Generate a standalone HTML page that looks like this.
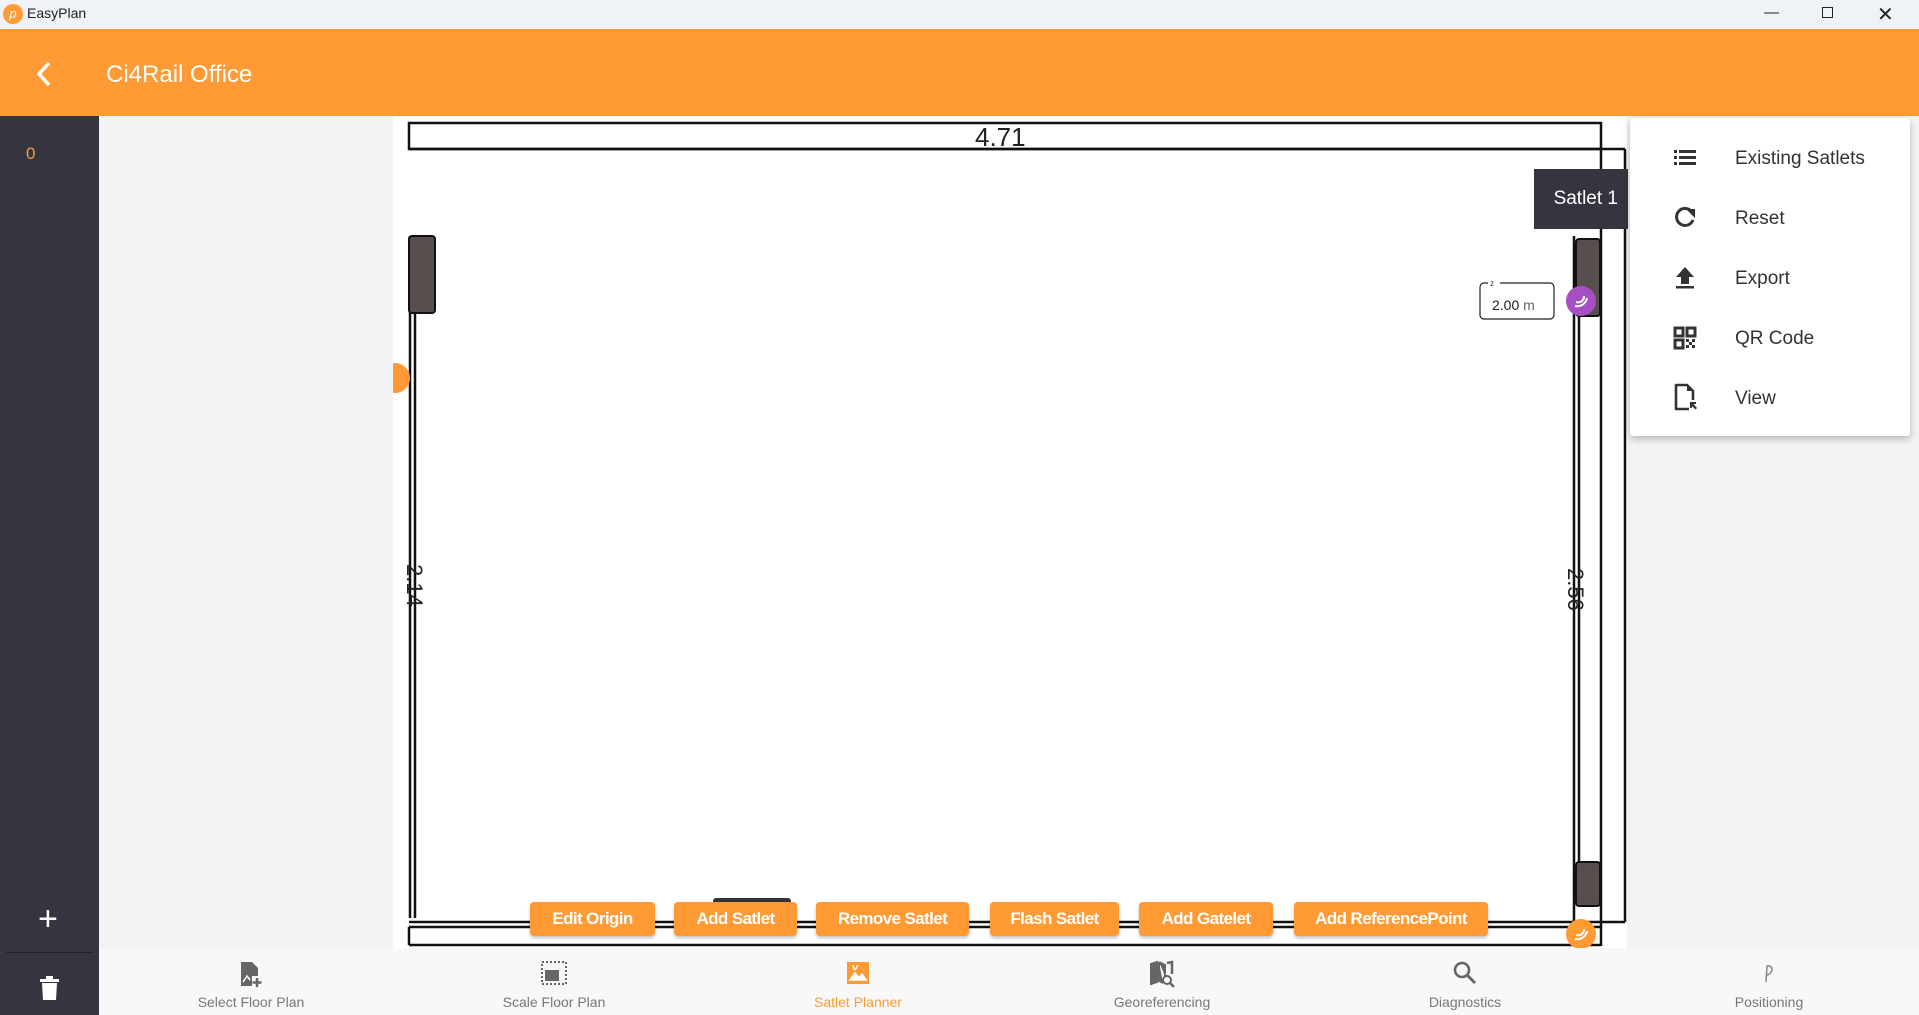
<!DOCTYPE html>
<html><head><meta charset="utf-8"><style>
*{margin:0;padding:0;box-sizing:border-box}
body{width:1919px;height:1015px;overflow:hidden;background:#f2f3f5;font-family:"Segoe UI","Liberation Sans",sans-serif;position:relative}
.abs{position:absolute}
.btn{position:absolute;top:902px;height:34px;background:#ff9a35;color:#fff;font-weight:bold;font-size:17px;letter-spacing:-0.6px;border-radius:4px;display:flex;align-items:center;justify-content:center;box-shadow:0 2px 3px rgba(0,0,0,.25)}
.nav{position:absolute;top:950px;width:200px;text-align:center;color:#777;font-size:14px}
.nav svg{display:block;margin:10px auto 6px}
.mi{position:absolute;left:1735px;font-size:19px;color:#333}
.ic{position:absolute;left:1672px}
</style></head><body>
<div class="abs" style="left:0;top:0;width:1919px;height:29px;background:#eff2f7"></div>
<div class="abs" style="left:3px;top:4px;width:20px;height:20px;border-radius:50%;background:#ff9a35;color:#fff;font-size:13px;text-align:center;line-height:20px;font-style:italic">p</div>
<div class="abs" style="left:27px;top:5px;font-size:14px;color:#222">EasyPlan</div>
<div class="abs" style="left:1764px;top:4px;font-size:15px;color:#222">&#8212;</div>
<div class="abs" style="left:1822px;top:7px;width:11px;height:11px;border:1.5px solid #222"></div>
<div class="abs" style="left:1877px;top:2px;font-size:20px;color:#222">&#10005;</div>
<div class="abs" style="left:0;top:29px;width:1919px;height:87px;background:#ff9a35"></div>
<svg class="abs" style="left:34px;top:60px" width="20" height="28"><path d="M15 3 L5 14 L15 25" stroke="#fff" stroke-width="3.5" fill="none"/></svg>
<div class="abs" style="left:106px;top:61px;font-size:24px;color:#fff">Ci4Rail Office</div>
<div class="abs" style="left:0;top:116px;width:99px;height:899px;background:#353540"></div>
<div class="abs" style="left:26px;top:144px;font-size:17px;color:#ff9a35">0</div>
<div class="abs" style="left:38px;top:902px;font-size:34px;color:#fff;line-height:34px">+</div>
<div class="abs" style="left:6px;top:952px;width:88px;height:1px;background:#222"></div>
<svg class="abs" style="left:40px;top:976px" width="20" height="26"><rect x="0" y="3" width="19" height="3" fill="#fff"/><rect x="6" y="0" width="7" height="3" fill="#fff"/><path d="M2 7 H17 L16 24 H3 Z" fill="#fff"/></svg>
<div class="abs" style="left:393px;top:116px;width:1234px;height:832px;background:#fff"></div>
<svg class="abs" style="left:393px;top:116px" width="1234" height="832">
<g stroke="#111" fill="none" stroke-width="2.5">
<rect x="16" y="7" width="1192" height="26"/>
<line x1="16" y1="33" x2="1232" y2="33"/>
<line x1="1232" y1="33" x2="1232" y2="806"/>
<line x1="17" y1="120" x2="17" y2="802"/><line x1="22" y1="198" x2="22" y2="802"/>
<line x1="1181" y1="120" x2="1181" y2="810"/><line x1="1186" y1="200" x2="1186" y2="790"/><line x1="1208" y1="33" x2="1208" y2="830"/>
<line x1="16" y1="806" x2="1232" y2="806"/><line x1="16" y1="811" x2="1208" y2="811"/>
<line x1="16" y1="829" x2="1208" y2="829"/>
<line x1="16" y1="811" x2="16" y2="829"/>
</g>
<rect x="16" y="120" width="26" height="77" rx="3" fill="#564f4d" stroke="#111" stroke-width="2"/>
<rect x="1183" y="123" width="24" height="77" rx="3" fill="#564f4d" stroke="#111" stroke-width="2"/>
<rect x="1183" y="746" width="24" height="44" rx="3" fill="#564f4d" stroke="#111" stroke-width="2"/>
<rect x="320" y="782" width="78" height="10" rx="3" fill="#333"/>
<text x="582" y="30" font-size="26" font-family="Liberation Sans" fill="#222">4.71</text>
<text x="755" y="805" font-size="22" font-family="Liberation Sans" fill="#222">0.07</text>
<text transform="translate(14,448) rotate(90)" font-size="22" font-family="Liberation Sans" fill="#222">2.14</text>
<text transform="translate(1175,452) rotate(90)" font-size="22" font-family="Liberation Sans" fill="#222">2.56</text>
<rect x="1087" y="167" width="74" height="36" rx="4" fill="#fff" stroke="#222" stroke-width="1.2"/>
<rect x="1095" y="162" width="12" height="8" fill="#fff"/>
<text x="1097" y="170" font-size="8" fill="#333" font-family="Liberation Sans">z</text>
<text x="1099" y="194" font-size="14" fill="#222" font-family="Liberation Sans">2.00 <tspan fill="#666">m</tspan></text>
<circle cx="1188" cy="185" r="15" fill="#a64fc5"/>
<circle cx="2" cy="262" r="15" fill="#ff9a35"/>
<circle cx="1188" cy="818" r="15" fill="#ff9a35"/>
<g stroke="#fff" stroke-width="2" fill="none"><path d="M1183 186 a6 6 0 0 0 8 -6 M1182 190 a10 10 0 0 0 12 -8"/><path d="M1183 819 a6 6 0 0 0 8 -6 M1182 823 a10 10 0 0 0 12 -8"/></g>
</svg>
<div class="abs" style="left:1534px;top:169px;width:94px;height:60px;background:#353540;color:#fff;font-size:19px;line-height:60px;text-align:right;padding-right:10px">Satlet 1</div>
<div class="abs" style="left:1630px;top:118px;width:280px;height:318px;background:#fff;box-shadow:0 3px 8px rgba(0,0,0,.25);border-radius:3px"></div>
<svg class="ic" style="top:147px" width="26" height="20"><g fill="#333"><rect x="2" y="3" width="3" height="3"/><rect x="7" y="3" width="17" height="3"/><rect x="2" y="9" width="3" height="3"/><rect x="7" y="9" width="17" height="3"/><rect x="2" y="15" width="3" height="3"/><rect x="7" y="15" width="17" height="3"/></g></svg>
<div class="mi" style="top:148px">Existing Satlets</div>
<svg class="ic" style="top:205px" width="26" height="26"><path d="M20 7 A8.5 8.5 0 1 0 21 15" stroke="#333" stroke-width="3" fill="none"/><path d="M14 4 H23 V13 Z" fill="#333"/></svg>
<div class="mi" style="top:208px">Reset</div>
<svg class="ic" style="top:265px" width="26" height="26"><path d="M13 2 L22 12 H17 V19 H9 V12 H4 Z" fill="#333"/><rect x="4" y="21" width="18" height="2.5" fill="#333"/></svg>
<div class="mi" style="top:268px">Export</div>
<svg class="ic" style="top:325px" width="26" height="26"><g fill="none" stroke="#333" stroke-width="3"><rect x="3" y="3" width="8" height="8"/><rect x="15" y="3" width="8" height="8"/><rect x="3" y="15" width="8" height="8"/></g><g fill="#333"><rect x="14" y="14" width="3" height="3"/><rect x="20" y="14" width="3" height="3"/><rect x="17" y="17" width="3" height="3"/><rect x="14" y="20" width="3" height="3"/><rect x="20" y="20" width="3" height="3"/></g></svg>
<div class="mi" style="top:328px">QR Code</div>
<svg class="ic" style="top:383px" width="28" height="30"><path d="M17 26 H4 V2 H15 L21 8 V17" stroke="#333" stroke-width="2.6" fill="none" stroke-linejoin="round"/><path d="M15 2 V8 H21 Z" fill="#333"/><path d="M18 19 H24 V21 H21.5 L25 25 L23.5 26.5 L20 23 V25 H18 Z" fill="#333"/></svg>
<div class="mi" style="top:388px">View</div>
<div class="btn" style="left:530px;width:125px">Edit Origin</div>
<div class="btn" style="left:674px;width:123px">Add Satlet</div>
<div class="btn" style="left:816px;width:153px">Remove Satlet</div>
<div class="btn" style="left:990px;width:129px">Flash Satlet</div>
<div class="btn" style="left:1139px;width:134px">Add Gatelet</div>
<div class="btn" style="left:1294px;width:194px">Add ReferencePoint</div>
<div class="abs" style="left:99px;top:948px;width:1820px;height:67px;background:#f8f8f8"></div>
<div class="nav" style="left:151px"><svg width="26" height="28"><path d="M3 2 H14 L20 8 V16 H14 V26 H3 Z" fill="#666"/><path d="M5 22 L9 16 L12 20" stroke="#fff" stroke-width="1.5" fill="none"/><path d="M19 18 V27 M14.5 22.5 H23.5" stroke="#666" stroke-width="2.5"/></svg>Select Floor Plan</div>
<div class="nav" style="left:454px"><svg width="28" height="28"><rect x="2" y="2" width="24" height="22" fill="none" stroke="#666" stroke-width="2" stroke-dasharray="2 2"/><rect x="5" y="10" width="14" height="11" fill="#666"/></svg>Scale Floor Plan</div>
<div class="nav" style="left:758px;color:#ff9a35"><svg width="26" height="28"><rect x="2" y="2" width="22" height="22" fill="#ff9a35"/><path d="M5 20 L10 13 L14 18 L17 14 L21 20 Z M8 5 L9 10 M13 5 L10 10" stroke="#fff" stroke-width="1.6" fill="#fff"/></svg>Satlet Planner</div>
<div class="nav" style="left:1062px"><svg width="28" height="28"><path d="M3 4 L9 2 V22 L3 24 Z M11 2 L17 5 V16 M11 2 V21 L15 23" fill="#666" stroke="#666" stroke-width="2"/><path d="M19 3 L24 2 V14" stroke="#666" stroke-width="2.5" fill="none"/><circle cx="19" cy="20" r="4" fill="none" stroke="#666" stroke-width="2"/><path d="M22 23 L26 27" stroke="#666" stroke-width="2.5"/></svg>Georeferencing</div>
<div class="nav" style="left:1365px"><svg width="26" height="28"><circle cx="10" cy="10" r="7" fill="none" stroke="#666" stroke-width="2.6"/><path d="M15 15 L23 23" stroke="#666" stroke-width="3"/></svg>Diagnostics</div>
<div class="nav" style="left:1669px"><svg width="26" height="28"><path d="M10 22 L11 6 Q16 5 16 10 Q15 14 11 15" stroke="#888" stroke-width="1.5" fill="none"/></svg>Positioning</div>
</body></html>
